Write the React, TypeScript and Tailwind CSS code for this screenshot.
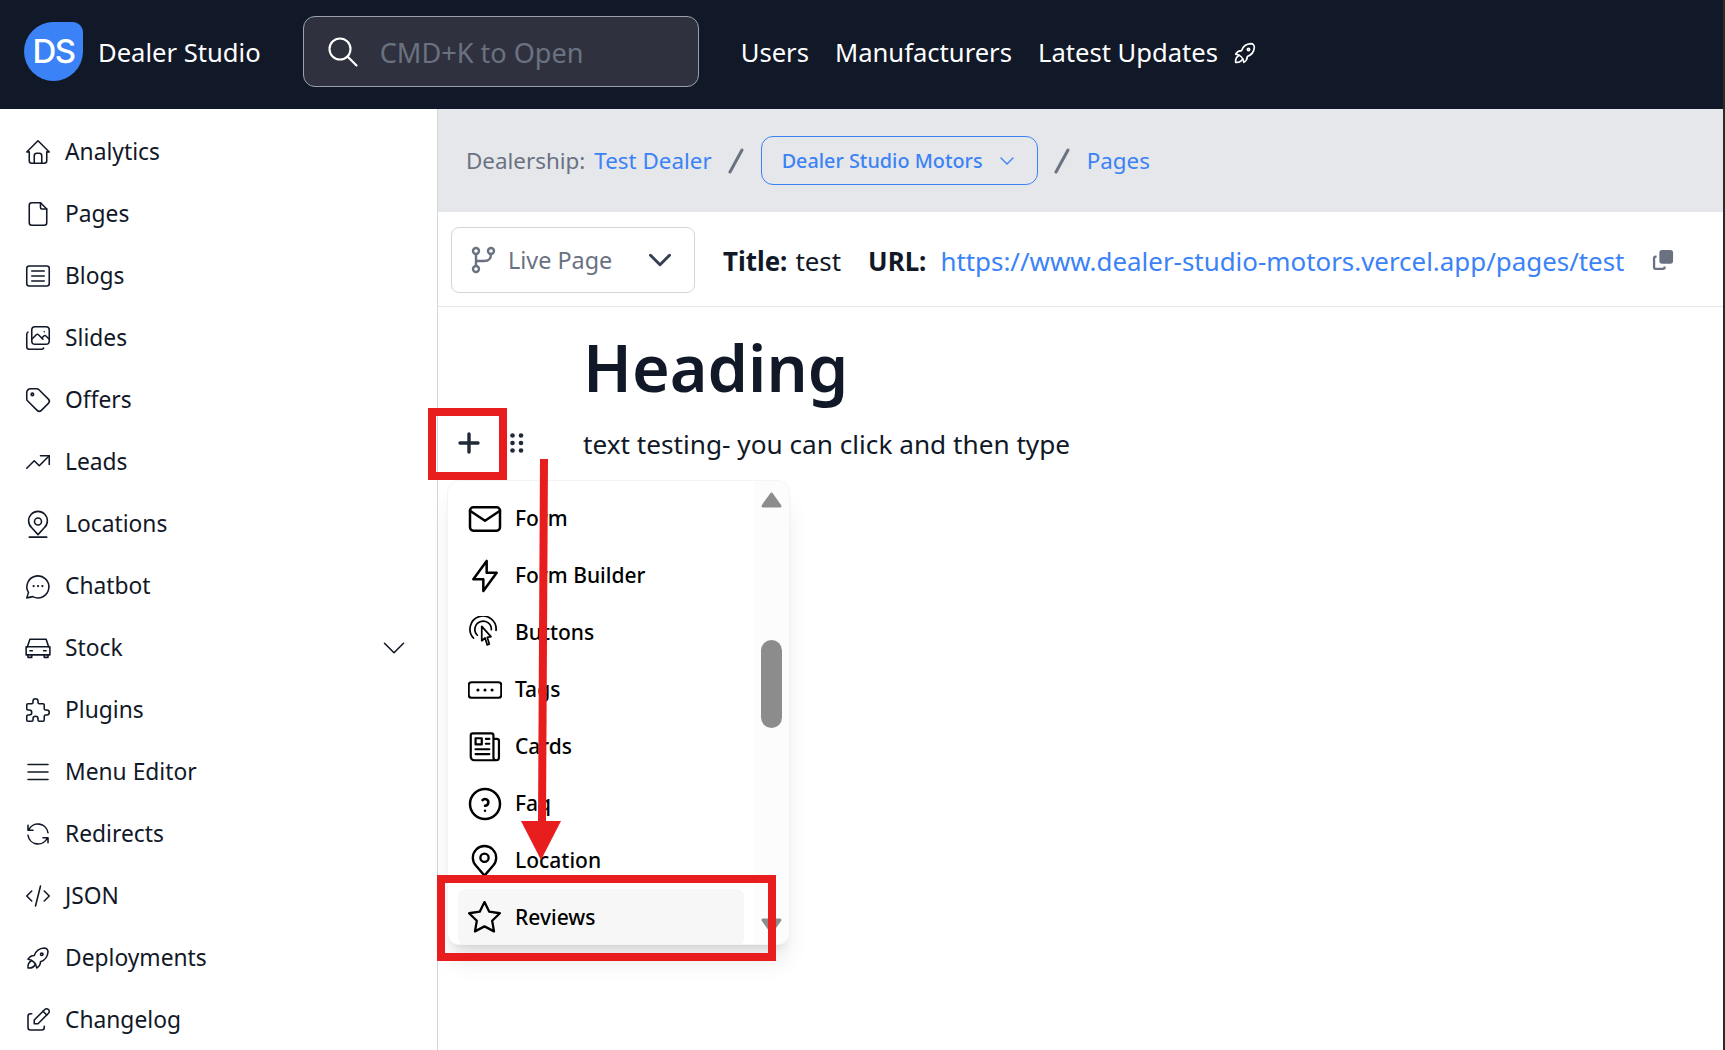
import type { ComponentType } from 'react'
import {
  TbArticle, TbBolt, TbChevronDown, TbCode, TbEdit, TbFile, TbHelpCircle, TbHome,
  TbLibraryPhoto, TbMail, TbMenu2, TbPuzzle, TbRefresh,
  TbRocket, TbSearch, TbStar, TbTag, TbTrendingUp,
} from 'react-icons/tb'

type IconProps = { size?: number; className?: string; strokeWidth?: number }

// front-on car, tabler has no such icon
const CarIcon = ({ size = 24 }: IconProps) => (
  <svg width={size} height={size} viewBox="0 0 24 24" fill="none" stroke="currentColor" strokeWidth="1.25" strokeLinecap="round" strokeLinejoin="round">
    <path d="M2.5 11h19v6.5h-19z" />
    <path d="M3.5 11l2-6h13l2 6" />
    <path d="M4 17.5v2h3v-2M17 17.5v2h3v-2" />
    <path d="M5.5 14.2h2M16.5 14.2h2" />
  </svg>
)

const PinBaseIcon = ({ size = 24 }: IconProps) => (
  <svg width={size} height={size} viewBox="0 0 24 24" fill="none" stroke="currentColor" strokeWidth="1.25" strokeLinecap="round" strokeLinejoin="round">
    <circle cx="12" cy="10" r="2.8" />
    <path d="M12 20.5l-5-5.5a7.5 7.5 0 1 1 10 0z" />
    <path d="M5 22.5h14" />
  </svg>
)

const PinIcon = ({ size = 24 }: IconProps) => (
  <svg width={size} height={size} viewBox="0 0 24 24" fill="none" stroke="currentColor" strokeWidth="1.7" strokeLinecap="round" strokeLinejoin="round">
    <circle cx="12" cy="10" r="3" />
    <path d="M12 23l-6-7a8.5 8.5 0 1 1 12 0z" />
  </svg>
)

const ChatDotsIcon = ({ size = 24 }: IconProps) => (
  <svg width={size} height={size} viewBox="0 0 24 24" fill="none" stroke="currentColor" strokeWidth="1.25" strokeLinecap="round" strokeLinejoin="round">
    <path d="M3 21.5l1.4-4.2a8.8 8.8 0 1 1 3.4 3.2z" />
    <path d="M8.5 12h.01M12 12h.01M15.5 12h.01" strokeWidth="1.8" />
  </svg>
)

const ClickArcsIcon = ({ size = 24 }: IconProps) => (
  <svg width={size} height={size} viewBox="0 0 24 24" fill="none" stroke="currentColor" strokeWidth="1.25" strokeLinecap="round" strokeLinejoin="round">
    <path d="M10 7.6V18l2.4-2 1.6 5 1.5-.6-1.5-4.9 2.7-.5z" />
    <path d="M4 16A9.5 9.5 0 1 1 20.4 10.5" />
    <path d="M6.8 14A6 6 0 1 1 17 10" />
  </svg>
)

const TagDotsIcon = ({ size = 24 }: IconProps) => (
  <svg width={size} height={size} viewBox="0 0 24 24" fill="none" stroke="currentColor" strokeWidth="1.5" strokeLinecap="round" strokeLinejoin="round">
    <rect x="0.5" y="6.5" width="23" height="11" rx="2" />
    <path d="M7 12h.01M12 12h.01M17 12h.01" strokeWidth="2.2" />
  </svg>
)

const NewspaperIcon = ({ size = 24 }: IconProps) => (
  <svg width={size} height={size} viewBox="0 0 24 24" fill="none" stroke="currentColor" strokeWidth="1.6" strokeLinecap="round" strokeLinejoin="round">
    <path d="M18.5 6.5H21a1.5 1.5 0 0 1 1.5 1.5v12a2 2 0 0 1-2 2h-16A2.5 2.5 0 0 1 2 19.5V4a1.5 1.5 0 0 1 1.5-1.5H17A1.5 1.5 0 0 1 18.5 4v16a2 2 0 0 0 2 2" />
    <path d="M5.5 6h4.5v4.5H5.5z" />
    <path d="M13 6.5h2.5M13 10h2.5M5.5 14h10M5.5 17.5h10" />
  </svg>
)

const BranchIcon = () => (
  <svg width="26" height="28" viewBox="0 0 26 28" fill="none" stroke="currentColor" strokeWidth="2.4" strokeLinecap="round" strokeLinejoin="round">
    <circle cx="5" cy="5" r="3" />
    <circle cx="5" cy="23" r="3" />
    <circle cx="20" cy="5" r="3" />
    <path d="M5 8v12M20 8c0 6-3 7-7 7H5" />
  </svg>
)

const CopyIcon = () => (
  <svg width="22" height="22" viewBox="0 0 24 24" className="text-gray-500" fill="currentColor">
    <rect x="8" y="1" width="15" height="15" rx="3" />
    <path d="M5 7H4a3 3 0 0 0-3 3v10a3 3 0 0 0 3 3h8a3 3 0 0 0 3-3v-1h-2.5v1a.5.5 0 0 1-.5.5H4a.5.5 0 0 1-.5-.5V10a.5.5 0 0 1 .5-.5h1z" />
  </svg>
)

const GripIcon = () => (
  <svg width="14" height="20" viewBox="0 0 14 20" className="text-gray-800" fill="currentColor">
    <circle cx="2.5" cy="2.5" r="2.3" /><circle cx="11" cy="2.5" r="2.3" />
    <circle cx="2.5" cy="10" r="2.3" /><circle cx="11" cy="10" r="2.3" />
    <circle cx="2.5" cy="17.5" r="2.3" /><circle cx="11" cy="17.5" r="2.3" />
  </svg>
)

const Slash = () => (
  <svg width="16" height="26" viewBox="0 0 16 26" className="mx-[16.5px] text-gray-500" stroke="currentColor" strokeWidth="3" strokeLinecap="round">
    <path d="M14 2L2 24" />
  </svg>
)

const ScrollArrow = ({ down }: { down?: boolean }) => (
  <svg width="21" height="16" viewBox="0 0 21 16" fill="#8c8c8c" stroke="#8c8c8c" strokeWidth="3" strokeLinejoin="round">
    <path d={down ? 'M2 2h17l-8.500 12z' : 'M10.500 2L19 14H2z'} />
  </svg>
)

const sideItems: { label: string; icon: ComponentType<IconProps>; caret?: boolean }[] = [
  { label: 'Analytics', icon: TbHome },
  { label: 'Pages', icon: TbFile },
  { label: 'Blogs', icon: TbArticle },
  { label: 'Slides', icon: TbLibraryPhoto },
  { label: 'Offers', icon: TbTag },
  { label: 'Leads', icon: TbTrendingUp },
  { label: 'Locations', icon: PinBaseIcon },
  { label: 'Chatbot', icon: ChatDotsIcon },
  { label: 'Stock', icon: CarIcon, caret: true },
  { label: 'Plugins', icon: TbPuzzle },
  { label: 'Menu Editor', icon: TbMenu2 },
  { label: 'Redirects', icon: TbRefresh },
  { label: 'JSON', icon: TbCode },
  { label: 'Deployments', icon: TbRocket },
  { label: 'Changelog', icon: TbEdit },
]

const blockItems: { label: string; icon: ComponentType<IconProps>; size: number; active?: boolean }[] = [
  { label: 'Form', icon: TbMail, size: 40 },
  { label: 'Form Builder', icon: TbBolt, size: 40 },
  { label: 'Buttons', icon: ClickArcsIcon, size: 33 },
  { label: 'Tags', icon: TagDotsIcon, size: 34 },
  { label: 'Cards', icon: NewspaperIcon, size: 33 },
  { label: 'Faq', icon: TbHelpCircle, size: 40 },
  { label: 'Location', icon: PinIcon, size: 33 },
  { label: 'Reviews', icon: TbStar, size: 37, active: true },
]

const Header = () => (
  <header className="h-[109px] shrink-0 bg-[#111827] flex items-center pl-6 pb-[6px] text-white text-[25.6px]">
    <div className="w-[59px] h-[59px] bg-[#3b82f6] rounded-[50%_18%_50%_50%] flex items-center justify-center font-['Inter',sans-serif] font-medium text-[33px] tracking-[-1.5px]">
      DS
    </div>
    <span className="ml-[15px] mt-[4px]">Dealer Studio</span>
    <div className="ml-[42px] w-[396px] h-[71px] rounded-xl border border-gray-400 bg-[#2f323e] flex items-center pl-[21px] gap-[19px]">
      <TbSearch size={36} strokeWidth={1.4} />
      <span className="mt-[4px] text-gray-500 text-[27.1px]">CMD+K to Open</span>
    </div>
    <nav className="ml-[42px] mt-[4px] flex items-center gap-[26px]">
      <span>Users</span>
      <span>Manufacturers</span>
      <span className="flex items-center gap-[13px]">
        Latest Updates
        <TbRocket size={28} strokeWidth={1.4} />
      </span>
    </nav>
  </header>
)

const Sidebar = () => (
  <aside className="w-[438px] shrink-0 border-r border-gray-300 bg-white pt-[12px] pl-[23px] pr-6 text-[22.8px] text-[#111827]">
    {sideItems.map(({ label, icon: Icon, caret }) => (
      <div key={label} className="h-[62px] flex items-center gap-[12px]">
        <Icon size={30} strokeWidth={1.25} />
        <span className="flex-1">{label}</span>
        {caret && <TbChevronDown size={38} strokeWidth={1} />}
      </div>
    ))}
  </aside>
)

const Breadcrumb = () => (
  <div className="h-[103px] bg-[#e5e7eb] border-b border-gray-200 flex items-center pl-7 pt-[1px] text-[22.4px]">
    <span className="text-gray-500">Dealership:</span>
    <span className="ml-[9px] text-[#3b82f6]">Test Dealer</span>
    <Slash />
    <div className="w-[277px] h-[49px] rounded-xl border border-[#3b82f6] text-[#3b82f6] text-[19.8px] font-medium flex items-center pl-[20px] gap-[12px]">
      Dealer Studio Motors
      <TbChevronDown size={24} strokeWidth={1.4} />
    </div>
    <Slash />
    <span className="text-[#3b82f6]">Pages</span>
  </div>
)

const Toolbar = () => (
  <div className="h-[95px] border-b border-gray-200 flex items-center pl-[13px] pt-[2px] text-[25.9px] text-[#111827]">
    <div className="w-[244px] h-[66px] rounded-lg border border-gray-300 flex items-center pl-[19px] pr-[18px] gap-[11px] text-gray-500 text-[23.4px]">
      <BranchIcon />
      <span className="flex-1 mt-[2px]">Live Page</span>
      <TbChevronDown size={38} strokeWidth={1.9} className="text-gray-700 -mr-[3px]" />
    </div>
    <span className="ml-7 mt-[3px] font-bold">Title:</span>
    <span className="ml-2 mt-[3px]">test</span>
    <span className="ml-[27px] mt-[3px] font-bold">URL:</span>
    <span className="ml-[14px] mt-[3px] text-[#3b82f6]">https://www.dealer-studio-motors.vercel.app/pages/test</span>
    <span className="ml-[28px]"><CopyIcon /></span>
  </div>
)

const BlockMenu = () => (
  <div className="absolute left-[9px] top-[173px] w-[343px] h-[465px] rounded-xl border border-gray-100 bg-white shadow-xl overflow-hidden flex">
    <div className="flex-1 pt-[9px] px-[10px] text-[21px] font-medium text-black">
      {blockItems.map(({ label, icon: Icon, size, active }) => (
        <div key={label} className={`h-[57px] flex items-center gap-[14px] pl-[10px] rounded-lg ${active ? 'bg-[#f7f7f7]' : ''}`}>
          <span className="w-[33px] h-[33px] flex items-center justify-center overflow-visible">
            <span className="shrink-0"><Icon size={size} strokeWidth={1.5} /></span>
          </span>
          <span>{label}</span>
        </div>
      ))}
    </div>
    <div className="w-[35px] bg-[#fcfcfc] relative flex flex-col items-center">
      <div className="absolute top-[11px]"><ScrollArrow /></div>
      <div className="absolute top-[159px] w-[21px] h-[88px] rounded-full bg-[#8c8c8c]" />
      <div className="absolute top-[437px]"><ScrollArrow down /></div>
    </div>
  </div>
)

const Editor = () => (
  <div className="flex-1 relative">
    <div className="pl-[145px] pt-[20px] text-[#111827]">
      <h1 className="text-[64.7px] leading-[80px] font-semibold">Heading</h1>
      <p className="mt-[18px] text-[26.2px]">text testing- you can click and then type</p>
    </div>
    <div className="absolute left-[20px] top-[125px] flex items-center gap-[30px] text-[#1f2937]">
      <svg width="22" height="22" viewBox="0 0 22 22" stroke="currentColor" strokeWidth="3.4" strokeLinecap="round">
        <path d="M11 2v18M2 11h18" />
      </svg>
      <GripIcon />
    </div>
    <BlockMenu />
  </div>
)

// red tutorial marks drawn on top of the screenshot
const Annotations = () => (
  <>
    <div className="absolute left-[428px] top-[408px] w-[79px] h-[72px] border-[8px] border-[#e81e1e]" />
    <div className="absolute left-[437px] top-[875px] w-[339px] h-[86px] border-[8px] border-[#e81e1e]" />
    <svg className="absolute left-[515px] top-[455px]" width="54" height="410" viewBox="0 0 54 410" fill="#e81e1e">
      <path d="M25 4h8l-2 362h-8z" />
      <path d="M6 366h40l-20 39z" />
    </svg>
  </>
)

export default function App() {
  return (
    <div className="relative w-[1725px] h-[1050px] overflow-hidden bg-white flex font-['Noto_Sans',sans-serif]">
      <div className="flex-1 min-w-0 flex flex-col">
        <Header />
        <div className="flex flex-1 min-h-0">
          <Sidebar />
          <main className="flex-1 flex flex-col min-w-0">
            <Breadcrumb />
            <Toolbar />
            <Editor />
          </main>
        </div>
      </div>
      <div className="w-[2px] shrink-0 bg-[#2b2b2b]" />
      <Annotations />
    </div>
  )
}
